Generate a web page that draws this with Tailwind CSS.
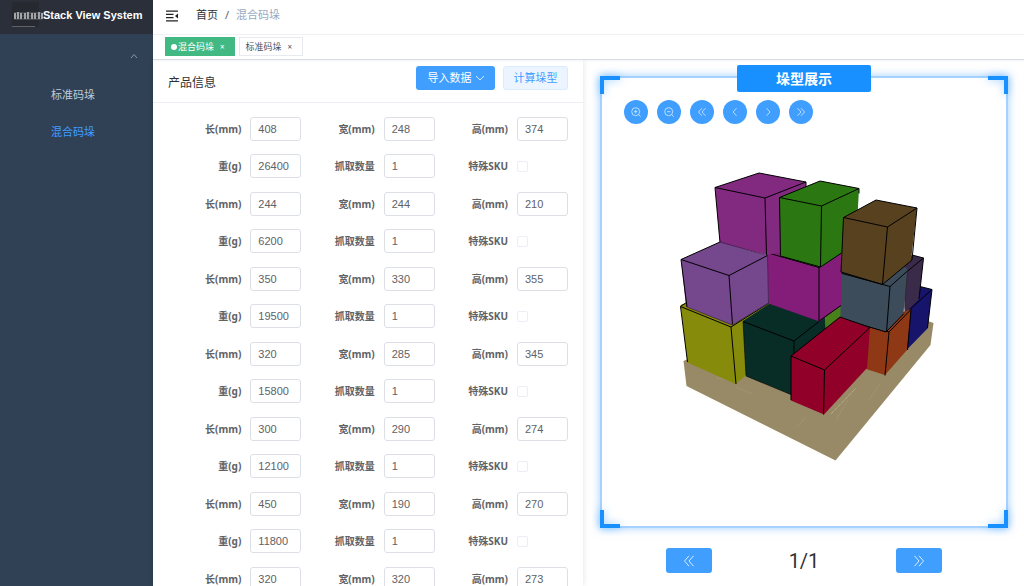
<!DOCTYPE html>
<html lang="zh-CN">
<head>
  <meta charset="UTF-8">
  <meta name="viewport" content="width=device-width, initial-scale=1.0">
  <title>Stack View System</title>
  <script src="https://cdn.jsdelivr.net/npm/@tailwindcss/browser@4"></script>
</head>

<body class="flex h-screen overflow-hidden bg-white font-['Noto_Sans','Noto_Sans_CJK_SC',sans-serif] text-[#606266]">

  <!-- Sidebar -->
  <aside class="flex w-[153px] shrink-0 flex-col bg-[#304156]">
    <a href="#" class="flex h-[34px] items-center bg-[#2b2f3a] pb-1 pl-[11px] font-['Liberation_Sans',sans-serif] text-[11px] font-bold whitespace-nowrap text-white">
      <svg class="h-7 w-8 shrink-0" viewBox="0 0 32 28" fill="none" aria-hidden="true">
        <rect x="1" y="1" width="27" height="25" fill="#272931" />
        <path d="M4 12v6M7 11v7M10 12v6M14 12v6M17 11v7M21 12v6M24 12v6M28 11v7M31 12v6" stroke="#c9c9cc" stroke-width="1.6" />
        <path d="M3 12h28M3 15h28M3 18h28" stroke="#8d8f95" stroke-opacity=".6" />
        <path d="M1 25.500h23" stroke="#777a80" stroke-opacity=".7" />
      </svg>
      <span>Stack View System</span>
    </a>
    <nav class="flex flex-col text-[11px] text-[#bfcbd9]">
      <button type="button" aria-label="收起" class="flex h-[43px] items-center justify-end pr-[15px]">
        <svg class="h-2 w-2" viewBox="0 0 8 8" fill="none" stroke="#909399"><path d="M1 6l3-3.500L7 6" /></svg>
      </button>
      <a href="#" class="flex h-[37px] items-center pl-[51px]">标准码垛</a>
      <a href="#" class="flex h-[37px] items-center pl-[51px] text-[#409eff]">混合码垛</a>
    </nav>
  </aside>

  <div class="flex min-w-0 flex-1 flex-col">
    <!-- Navbar -->
    <header class="flex h-[35px] shrink-0 items-center border-b border-[#f0f1f2] pb-[3px] pl-3">
      <button type="button" aria-label="菜单">
        <svg class="h-3 w-[14px]" viewBox="0 0 14 12" fill="none" stroke="#222" stroke-width="1.3">
          <path d="M1 1.200h12M1 4.400h7.500M1 7.600h7.500M1 10.800h12" />
          <path d="M13 3.500v5L10 6z" fill="#222" stroke="none" />
        </svg>
      </button>
      <nav class="flex items-center gap-[7px] pl-[17px] text-[11px]">
        <a href="#" class="text-[#303133]">首页</a>
        <span>/</span>
        <span class="text-[#97a8be]">混合码垛</span>
      </nav>
    </header>

    <!-- Opened tabs -->
    <div class="relative z-10 flex h-[25px] shrink-0 gap-1 border-b border-[#d8dce5] bg-white pt-[2px] pl-3 text-[9px] shadow-xs">
      <a href="#" class="flex h-[19px] items-center border border-[#42b983] bg-[#42b983] px-[5px] text-white">
        <i class="mr-px h-[6px] w-[6px] rounded-full bg-white"></i>混合码垛
        <span class="pt-px pr-1 pl-[6px] text-[8px]">×</span>
      </a>
      <a href="#" class="flex h-[19px] items-center border border-[#d8dce5]/60 bg-white px-[6px] text-[#495060]">标准码垛
        <span class="pt-px pr-1 pl-[6px] text-[8px]">×</span>
      </a>
    </div>

    <main class="grid min-h-0 flex-1 grid-cols-[430fr_441fr]">
      <!-- Product form -->
      <section class="flex min-h-0 flex-col overflow-hidden shadow-[0_0_6px_rgba(0,0,0,0.12)]">
        <div class="flex h-[43px] shrink-0 items-center border-b border-[#ebeef5] px-[15px]">
          <h2 class="flex-1 pt-[3px] text-[12px] text-[#303133]">产品信息</h2>
          <div class="flex gap-2 pb-[6px] text-[11px]">
            <button type="button" class="flex h-6 w-[79px] items-center justify-center gap-1 rounded-[3px] bg-[#409eff] text-white">导入数据
              <svg class="h-2 w-2" viewBox="0 0 8 8" fill="none" stroke="#fff" stroke-width=".8"><path d="M0 2l4 4 4-4" /></svg>
            </button>
            <button type="button" class="h-6 w-[65px] rounded-[3px] border border-[#d9ecff] bg-[#ecf5ff] text-[#409eff]">计算垛型</button>
          </div>
        </div>
        <form id="products" class="flex flex-col gap-[14px] px-[15px] pt-[14px] text-[10px]"></form>
      </section>

      <!-- Stack preview -->
      <section class="flex min-h-0 flex-col pt-4 pr-4 pl-[17px]">
        <div class="relative flex min-h-0 flex-1 flex-col border-2 border-[#a6d2ff] shadow-[0_0_8px_rgba(64,158,255,0.5)]">
          <div class="flex gap-[9px] bg-white pt-[22px] pl-[22px]">
            <button type="button" aria-label="放大" class="flex h-6 w-6 items-center justify-center rounded-full bg-[#409eff]">
              <svg class="h-[10px] w-[10px]" viewBox="0 0 10 10" fill="none" stroke="#d9ecff" stroke-width=".8"><circle cx="4.700" cy="4.700" r="4" /><path d="M7.600 7.600L9.700 9.700M3 4.700h3.400M4.700 3v3.400" /></svg>
            </button>
            <button type="button" aria-label="缩小" class="flex h-6 w-6 items-center justify-center rounded-full bg-[#409eff]">
              <svg class="h-[10px] w-[10px]" viewBox="0 0 10 10" fill="none" stroke="#d9ecff" stroke-width=".8"><circle cx="4.700" cy="4.700" r="4" /><path d="M7.600 7.600L9.700 9.700M3 4.700h3.400" /></svg>
            </button>
            <button type="button" aria-label="第一层" class="flex h-6 w-6 items-center justify-center rounded-full bg-[#409eff]">
              <svg class="h-[10px] w-[10px]" viewBox="0 0 10 10" fill="none" stroke="#d9ecff" stroke-width=".8"><path d="M5 1.200L1.500 5 5 8.800M8.500 1.200L5 5l3.500 3.800" /></svg>
            </button>
            <button type="button" aria-label="上一个" class="flex h-6 w-6 items-center justify-center rounded-full bg-[#409eff]">
              <svg class="h-[10px] w-[10px]" viewBox="0 0 10 10" fill="none" stroke="#d9ecff" stroke-width=".8"><path d="M6.500 1.200L3 5l3.500 3.800" /></svg>
            </button>
            <button type="button" aria-label="下一个" class="flex h-6 w-6 items-center justify-center rounded-full bg-[#409eff]">
              <svg class="h-[10px] w-[10px]" viewBox="0 0 10 10" fill="none" stroke="#d9ecff" stroke-width=".8"><path d="M3.500 1.200L7 5 3.500 8.800" /></svg>
            </button>
            <button type="button" aria-label="最后一层" class="flex h-6 w-6 items-center justify-center rounded-full bg-[#409eff]">
              <svg class="h-[10px] w-[10px]" viewBox="0 0 10 10" fill="none" stroke="#d9ecff" stroke-width=".8"><path d="M1.500 1.200L5 5 1.500 8.800M5 1.200L8.500 5 5 8.800" /></svg>
            </button>
          </div>

          <svg class="min-h-0 w-full flex-1 bg-white" viewBox="602 124 404 402" role="img" aria-label="垛型">
            <!-- pallet -->
            <path fill="#988a66" d="M683.500 361L840 290l93.500 33-3 22L835.500 460.500 686.500 386z" />
            <path stroke="#a89c78" stroke-width=".5" fill="none" d="M735 387l18 7M806 417l-9 10M880 384l-11 16M848 400l-12 20M716 378l20 3" />
            <path stroke="#c4bb9c" stroke-width=".7" stroke-dasharray="4 1" d="M831 414l25-26" />
            <!-- back boxes -->
            <path fill="#17146b" d="M918 286l14 3.500-4.500 39L907 349.500V300z" />
            <path stroke="#000" d="M918 286l14 3.500M932 289.500L908 311M932 289.500L927.500 328" fill="none" />
            <path fill="#3b2b4b" d="M902 262l10-7 11.500 3-4.500 41-14 14z" />
            <path stroke="#000" d="M912 255l11.500 3M923.500 258L906.500 272M923.500 258L919 299" fill="none" />
            <path fill="#48801a" d="M825 314l16-10v24h-15z" />
            <!-- orange -->
            <path fill="#8f3816" d="M867 325l44-16-4 41-22 25-19-6z" />
            <path stroke="#000" d="M870 327l19 5M889 332L911 309.500M889 332L885 375.500M911 309.500L907.500 350" fill="none" />
            <!-- slate -->
            <path fill="#3d4c5a" d="M840.500 272l50-14 17 11-4 44-17 19-46-14z" />
            <path stroke="#000" d="M840.500 273l49.500 13.500M890 286.500L907.500 271M890 286.500L886.500 332M840 318l46 14 18-18.500" fill="none" />
            <path stroke="#222" stroke-width=".5" d="M907.500 271l-3.500 42" />
            <!-- yellow -->
            <path fill="#878b0b" d="M680.500 305l45-20 47 18-1 22-25 50-11 9-48-21.500z" />
            <path stroke="#000" d="M680.500 306.500L731 327l5 57M731 327L769 303M680.500 306.500L687.500 362M680.500 306.500l6-4" fill="none" />
            <!-- dark green -->
            <path fill="#082c26" d="M743 321l26-17 30-6 26 20 1 15-34 62-46-19z" />
            <path stroke="#000" d="M743 321.500L794 341M794 341L826 316M794 341v20" fill="none" />
            <path stroke="#000" stroke-width=".6" d="M743 321.500l3 54M746 376l46 19" fill="none" />
            <!-- magenta -->
            <path fill="#841c79" d="M766.500 252l30-12 45 10 .5 55-22.500 16.500-51-18z" />
            <path stroke="#000" d="M766.500 252.500L819 267.500M819 267.500L842 252M819 267.500V321M819 321l22-15.500" fill="none" />
            <!-- purple, top -->
            <path fill="#822980" d="M715 187.500L759 173l47 9-2 68-24 2-13 3-47-12z" />
            <path stroke="#000" d="M715 187.500L765 198l41-16M715 187.500L759 173l47 9v5M765 198l1.500 57M715 187.500l5 55" fill="none" />
            <!-- violet -->
            <path fill="#75478c" d="M681 259.500L720 242l47.500 13.500L769 303l-37 22-46-18.500z" />
            <path stroke="#000" d="M681 259.500L729 275.500l38.500-20M729 275.500l3.500 49M681 259.500l6 47.500M681 259.500L720 242" fill="none" />
            <path stroke="#2c1538" stroke-width=".6" d="M720 242l47.500 13.500 1 47.500-36 22-45.500-18" fill="none" />
            <!-- green -->
            <path fill="#2b7812" d="M779.500 197L820 181l39 7.500-3 55-35 24-40-11z" />
            <path stroke="#000" d="M779.500 197.500L821.500 206l37.500-17.500M779.500 197.500L820 181l39 7.500v5M821.500 206l-1 61M779.500 197.500l1 58M780.500 256l40 11 21-14" fill="none" />
            <!-- brown -->
            <path fill="#58411f" d="M843.500 217.500L876 200l41 8-6 53-28 23-42-12z" />
            <path stroke="#000" d="M843.500 217.500L887.500 227l29.500-19M887.500 227l-5 57M843.500 217.500L876 200l41 8-5 52M841 272l41.500 12.500L912 260M843.500 217.500L841 272" fill="none" />
            <!-- red -->
            <path fill="#900029" d="M791 356l49-39 30 10.500-3 40.500-43 46.500-33-14z" />
            <path stroke="#000" d="M791 356L824.500 370l45.500-42.500M824.500 370l-1 44.500M791 356l49-39 30 10.500M791 356v44" fill="none" />
          </svg>

          <!-- frame corners and caption -->
          <i class="absolute -top-[2px] -left-[2px] h-[18px] w-5 border-t-4 border-l-4 border-[#1890ff] drop-shadow-[0_0_4px_rgba(24,144,255,0.5)]"></i>
          <i class="absolute -top-[2px] -right-[2px] h-[18px] w-5 border-t-4 border-r-4 border-[#1890ff] drop-shadow-[0_0_4px_rgba(24,144,255,0.5)]"></i>
          <i class="absolute -bottom-[2px] -left-[2px] h-[18px] w-5 border-b-4 border-l-4 border-[#1890ff] drop-shadow-[0_0_4px_rgba(24,144,255,0.5)]"></i>
          <i class="absolute -right-[2px] -bottom-[2px] h-[18px] w-5 border-r-4 border-b-4 border-[#1890ff] drop-shadow-[0_0_4px_rgba(24,144,255,0.5)]"></i>
          <div class="absolute inset-x-0 -top-[13px] flex justify-center">
            <h2 class="w-[134px] rounded-xs bg-[#1890ff] text-center text-[14px] leading-[27px] font-bold text-white">垛型展示</h2>
          </div>
        </div>

        <div class="flex h-[58px] shrink-0 items-center justify-between px-[66px] pt-[7px]">
          <button type="button" aria-label="上一页" class="flex h-[25px] w-[46px] items-center justify-center rounded-[3px] bg-[#409eff]">
            <svg class="h-3 w-3" viewBox="0 0 12 12" fill="none" stroke="#ecf5ff" stroke-width=".9"><path d="M6 .8L1.500 6 6 11.200M10.500 .8L6 6l4.500 5.200" /></svg>
          </button>
          <span class="font-[Roboto,sans-serif] text-[20px] text-[#303133]">1/1</span>
          <button type="button" aria-label="下一页" class="flex h-[25px] w-[46px] items-center justify-center rounded-[3px] bg-[#409eff]">
            <svg class="h-3 w-3" viewBox="0 0 12 12" fill="none" stroke="#ecf5ff" stroke-width=".9"><path d="M1.500 .8L6 6l-4.500 5.200M6 .8L10.500 6 6 11.200" /></svg>
          </button>
        </div>
      </section>
    </main>
  </div>

  <script>
    const products = [
      { length: 408, width: 248, height: 374, weight: 26400, count: 1 },
      { length: 244, width: 244, height: 210, weight: 6200, count: 1 },
      { length: 350, width: 330, height: 355, weight: 19500, count: 1 },
      { length: 320, width: 285, height: 345, weight: 15800, count: 1 },
      { length: 300, width: 290, height: 274, weight: 12100, count: 1 },
      { length: 450, width: 190, height: 270, weight: 11800, count: 1 },
      { length: 320, width: 320, height: 273, weight: 10600, count: 1 },
    ];

    function field(label, name, i, value) {
      return `
        <div class="flex h-6 items-center gap-[9px]">
          <label for="${name}-${i}" class="flex-1 pt-px text-right font-bold">${label}</label>
          <input id="${name}-${i}" value="${value}" class="h-6 w-[51px] rounded-[3px] border border-[#dcdfe6] bg-white px-[7px] font-['Liberation_Sans',sans-serif] text-[11px] text-[#606266]">
        </div>`;
    }

    function checkbox(label, name, i) {
      return `
        <div class="flex h-6 items-center gap-[9px]">
          <label for="${name}-${i}" class="flex-1 pt-px text-right font-bold">${label}</label>
          <div class="flex w-[51px]">
            <input type="checkbox" id="${name}-${i}" class="h-[11px] w-[11px] appearance-none rounded-xs border border-[#ebeef5] bg-white">
          </div>
        </div>`;
    }

    document.getElementById('products').innerHTML = products.map((p, i) => `
      <div class="grid grid-cols-3 gap-y-[13px]">
        ${field('长(mm)', 'length', i, p.length)}
        ${field('宽(mm)', 'width', i, p.width)}
        ${field('高(mm)', 'height', i, p.height)}
        ${field('重(g)', 'weight', i, p.weight)}
        ${field('抓取数量', 'count', i, p.count)}
        ${checkbox('特殊SKU', 'special', i)}
      </div>`).join('');
  </script>

</body>
</html>
